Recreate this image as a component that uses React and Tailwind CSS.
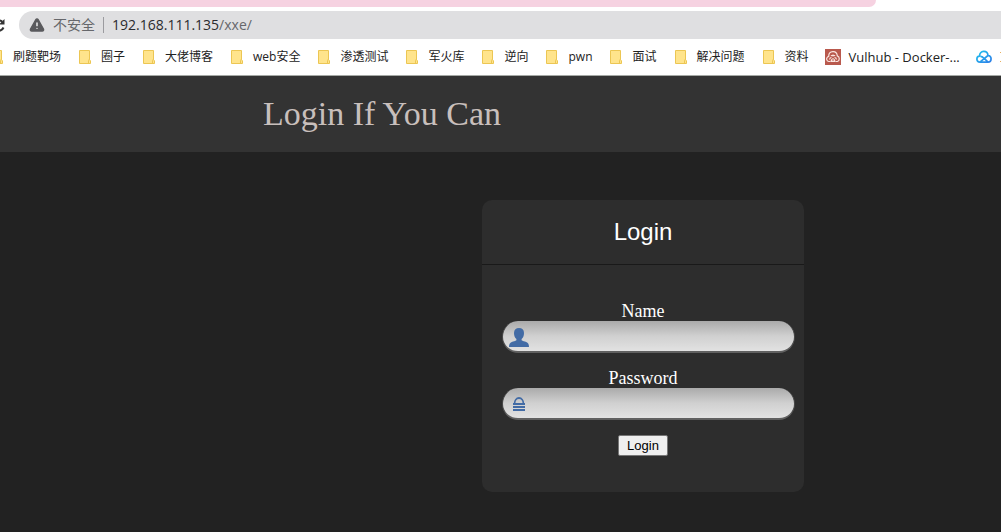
import { TriangleAlert } from "lucide-react";

const FOLDERS = [
    "刷题靶场",
    "圈子",
    "大佬博客",
    "web安全",
    "渗透测试",
    "军火库",
    "逆向",
    "pwn",
    "面试",
    "解决问题",
    "资料",
];

const FolderIcon = () => (
    <svg className="w-3 h-[14px] shrink-0" viewBox="0 0 12 14" aria-hidden="true">
        <path d="M.5.5h10v9l1 1.5v2.5H.5z" fill="#ffe48c" stroke="#ecc653" />
        <path d="M9.5 13v-2.5l1-1.5" fill="none" stroke="#ecc653" />
    </svg>
);

const VulhubIcon = () => (
    <svg className="size-4 shrink-0" viewBox="0 0 16 16" aria-hidden="true">
        <path d="M0 0h16v16H0z" fill="#b9594d" />
        <path
            d="M3.6 12.5C1.6 12 1 9.600 2.400 8.100c.4-.5.9-.7 1.300-.8C3.700 1.500 11.800 1 12.300 6.900c2.600.9 2.600 4.700.1 5.600M5.500 12.500H3.600M10.500 12.500h1.900M4.500 10.500c.3-1.500 1.200-2 2-2M11.500 10.500c-.3-1.500-1.200-2-2-2M8 5.500v2M6 7c.5-1 3.500-1 4 0"
            fill="none"
            stroke="#fbe6e0"
            strokeWidth="1.200"
        />
        <path d="M5.500 13c.2-5 4.800-5 5 0z" fill="#fbe6e0" />
        <path d="M7.500 10h1v2h-1z" fill="#b9594d" />
    </svg>
);

const CloudIcon = () => (
    <svg className="size-4 shrink-0" viewBox="0 0 16 16" aria-hidden="true">
        <defs>
            <linearGradient id="cloud" x1="0" x2="1" y1="0" y2="1">
                <stop offset="0" stopColor="#1fc3ee" />
                <stop offset="1" stopColor="#2f7fe8" />
            </linearGradient>
        </defs>
        <path
            d="M4 13.200C0 13.200-.2 7.500 3.600 7.200 3.200 1.200 11.500.8 12 6.500c4.200.3 4 6.700 0 6.700zM4.500 7.300c1.500 0 2.500.8 3.500 1.900l3.500 3.500M4.500 12.700 12 6.500"
            fill="none"
            stroke="url(#cloud)"
            strokeWidth="1.700"
            strokeLinejoin="round"
        />
    </svg>
);

const UserIcon = () => (
    <svg className="w-5 h-[19px]" viewBox="0 0 20 19" aria-hidden="true">
        <path
            d="M10 0c3 0 5 1.800 5 5 0 2.900-1 4.800-2.400 6v1.200c1 .8 3 1 4.600 1.800 2 .9 2.800 2.400 2.800 5H0c0-2.600.8-4.100 2.800-5 1.600-.8 3.600-1 4.600-1.800V11C6 9.800 5 7.900 5 5c0-3.200 2-5 5-5z"
            fill="#426ba5"
        />
    </svg>
);

const LockIcon = () => (
    <svg className="w-3 h-[14px]" viewBox="0 0 12 14" aria-hidden="true">
        <path d="M1.500 7C1.500 3.500 3.500 1 6 1s4.500 2.500 4.500 6" fill="none" stroke="#426ba5" strokeWidth="1.800" />
        <path d="M0 6h12v2H0zM0 9h12v2H0zM0 12h12v2H0z" fill="#426ba5" />
    </svg>
);

const Field = ({ id, label, type, icon }) => (
    <div>
        <label htmlFor={id} className="block text-center text-[18px] leading-5 font-['Liberation_Serif',serif]">
            {label}
        </label>
        <div className="relative pl-5 pr-[9px]">
            <span className="absolute left-[27px] top-0 flex h-8 w-5 items-center justify-center">
                {icon}
            </span>
            <input
                id={id}
                type={type}
                className="block h-8 w-full rounded-full border-x border-b-2 border-x-[#4a4a4a] border-b-[#606060] bg-linear-to-b from-[#aaa] via-[#d0d0d0] to-[#e2e2e2] pl-9 pr-4 text-sm text-[#222] outline-none"
            />
        </div>
    </div>
);

const BrowserBar = () => (
    <div className="overflow-hidden border-b border-[#a5a9a5] bg-white font-['Open_Sans','Noto_Sans_CJK_SC',sans-serif]">
        <div className="h-[7px] w-7/8 rounded-br-lg bg-[#f6d2e1]" />
        <div className="mt-1 flex items-center">
            <svg className="-ml-2 mr-[14px] size-[13px] shrink-0" viewBox="0 0 13 13" aria-hidden="true">
                <path d="M11.500 8.500a5.200 5.200 0 1 1-1.200-5.700" fill="none" stroke="#333" strokeWidth="2" />
                <path d="M12.500 0v5.500H7z" fill="#333" />
            </svg>
            <div className="flex h-7 flex-1 items-center rounded-l-full bg-[#dfdfe1] pl-[10px] text-[14px] leading-5">
                <TriangleAlert className="size-4 fill-[#5a5a5d] text-[#5a5a5d] [&_path:not(:first-child)]:stroke-white" />
                <span className="ml-2 text-[#66676b]">不安全</span>
                <span className="mx-2 h-4 w-px bg-[#9b9b9f]" />
                <span className="text-[#2a2b2e]">
                    192.168.111.135<span className="text-[#66676b]">/xxe/</span>
                </span>
            </div>
        </div>
        <nav className="-ml-[9px] flex h-9 items-center gap-4 whitespace-nowrap text-[#222]">
            <div className="flex items-center gap-[18px] text-[12px] leading-4">
                {FOLDERS.map((name) => (
                    <a key={name} href="#" className="flex items-center gap-[10px]">
                        <FolderIcon />
                        {name}
                    </a>
                ))}
            </div>
            <a href="#" className="flex items-center gap-2 text-[13px] leading-4">
                <VulhubIcon />
                Vulhub - Docker-...
            </a>
            <a href="#" aria-label="Cloud" className="flex items-center gap-2">
                <CloudIcon />
                <span className="h-[10px] w-2 border-y border-[#e8b060]" />
            </a>
        </nav>
    </div>
);

export default function App() {
    return (
        <div className="flex min-h-screen flex-col bg-[#222]">
            <BrowserBar />
            <header className="bg-[#333] py-[18px] pl-[263px]">
                <h1 className="text-[34px] leading-10 text-[#c8bfbc] font-['Liberation_Serif',serif]">
                    Login If You Can
                </h1>
            </header>
            <main className="pb-10 pt-12">
                <form
                    className="ml-[482px] w-[322px] rounded-[10px] bg-[#2d2d2d] pb-9 text-white font-['Liberation_Sans',sans-serif]"
                    onSubmit={(e) => e.preventDefault()}
                >
                    <h2 className="border-b border-[#191919] py-4 text-center text-[24px] leading-8">
                        Login
                    </h2>
                    <div className="flex flex-col gap-[15px] pt-9">
                        <Field id="username" label="Name" type="text" icon={<UserIcon />} />
                        <Field id="password" label="Password" type="password" icon={<LockIcon />} />
                        <button
                            type="submit"
                            className="mx-auto rounded-xs border border-[#767676] bg-[#efefef] px-2 text-[13px] leading-[19px] text-black"
                        >
                            Login
                        </button>
                    </div>
                </form>
            </main>
        </div>
    );
}
